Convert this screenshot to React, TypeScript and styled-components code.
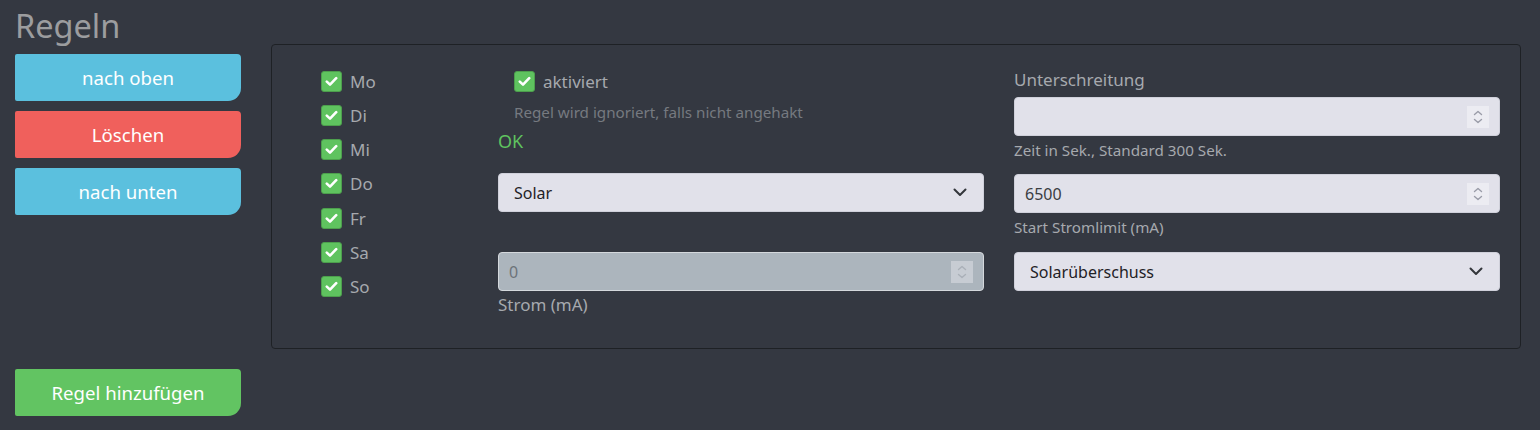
import React from 'react';
import styled, { createGlobalStyle } from 'styled-components';

const GlobalStyle = createGlobalStyle`
  html, body {
    margin: 0;
    padding: 0;
    background: #343841;
    font-family: 'Noto Sans', 'Open Sans', sans-serif;
  }
`;

const Page = styled.div`
  width: 1540px;
  height: 430px;
  padding: 0 19px 0 15px;
  box-sizing: border-box;
  background: #343841;
`;

const Title = styled.h1`
  margin: 0;
  height: 44px;
  line-height: 52px;
  font-size: 32.5px;
  font-weight: 400;
  color: #9c9d9f;
`;

const Row = styled.div`
  display: flex;
  align-items: flex-start;
  gap: 30px;
`;

const Side = styled.div`
  width: 226px;
  padding-top: 10px;
  display: flex;
  flex-direction: column;
  gap: 10px;
  flex-shrink: 0;
`;

const ActionButton = styled.button<{ tone: string }>`
  width: 226px;
  height: 47px;
  border: none;
  border-radius: 2px 4px 13px 2px;
  background: ${({ tone }) => tone};
  color: #ffffff;
  font-family: inherit;
  font-size: 18.6px;
  cursor: pointer;
`;

const Panel = styled.div`
  flex: 1;
  height: 305px;
  box-sizing: border-box;
  border: 1px solid #1e2125;
  border-radius: 4px;
  padding: 25px 20px 0 49px;
  display: grid;
  grid-template-columns: 147px 486px 486px;
  column-gap: 30px;
  align-items: start;
`;

const Days = styled.div`
  display: flex;
  flex-direction: column;
  gap: 12.3px;
`;

const CheckRow = styled.label<{ indent?: number }>`
  display: flex;
  align-items: center;
  gap: 8px;
  height: 22px;
  padding-left: ${({ indent }) => indent ?? 0}px;
  color: #a6a9ae;
  font-size: 17px;
`;

const Box = styled.span`
  width: 21px;
  height: 21px;
  border-radius: 3px;
  background: #5fc35f;
  border: 1px solid #4d9f4d;
  box-sizing: border-box;
  display: flex;
  align-items: center;
  justify-content: center;
`;

const Column = styled.div`
  display: flex;
  flex-direction: column;
`;

const Hint = styled.div<{ muted?: boolean; top?: number; indent?: number }>`
  font-size: 15.2px;
  color: ${({ muted }) => (muted ? '#767a80' : '#a6a9ae')};
  margin-top: ${({ top }) => top ?? 0}px;
  padding-left: ${({ indent }) => indent ?? 0}px;
  line-height: 20px;
`;

const Ok = styled.div`
  color: #5fc35f;
  font-size: 18px;
  line-height: 24px;
  margin-top: 7px;
`;

const Label = styled.div<{ top?: number }>`
  font-size: 17px;
  color: #a6a9ae;
  line-height: 24px;
  margin-top: ${({ top }) => top ?? 0}px;
`;

const Field = styled.div<{ disabled?: boolean; top?: number }>`
  height: 39px;
  box-sizing: border-box;
  border: 1px solid ${({ disabled }) => (disabled ? '#d4d8dc' : '#cfd0da')};
  border-radius: 4px;
  background: ${({ disabled }) => (disabled ? '#acb5bd' : '#e1e1ea')};
  display: flex;
  align-items: center;
  justify-content: space-between;
  margin-top: ${({ top }) => top ?? 0}px;
  padding: 0 16px 0 15px;
  font-size: 16px;
  color: #1f2226;
`;

const NumberField = styled(Field)`
  padding: 0 10px 0 10px;
`;

const Value = styled.span<{ disabled?: boolean }>`
  color: ${({ disabled }) => (disabled ? '#6c7379' : '#3a3d42')};
`;

const Spin = styled.span<{ disabled?: boolean }>`
  width: 22px;
  height: 22px;
  background: ${({ disabled }) => (disabled ? '#c7ccd3' : '#ececf2')};
  display: flex;
  align-items: center;
  justify-content: center;
`;

const AddRow = styled.div`
  margin-top: 20px;
`;

const Check = () => (
  <Box>
    <svg width="13" height="11" viewBox="0 0 13 11">
      <path d="M1.8 5.6 L5 8.6 L11.2 2.2" fill="none" stroke="#fff" strokeWidth="2.6" strokeLinecap="round" strokeLinejoin="round" />
    </svg>
  </Box>
);

const Chevron = () => (
  <svg width="14" height="9" viewBox="0 0 14 9">
    <path d="M1.5 1.5 L7 7 L12.5 1.5" fill="none" stroke="#33363b" strokeWidth="2" strokeLinecap="round" strokeLinejoin="round" />
  </svg>
);

const Spinner = ({ disabled }: { disabled?: boolean }) => (
  <Spin disabled={disabled}>
    <svg width="10" height="16" viewBox="0 0 10 16">
      <path d="M1.5 5.5 L5 2.5 L8.5 5.5 M1.5 10.5 L5 13.5 L8.5 10.5" fill="none" stroke={disabled ? '#aab0b8' : '#9a9ca8'} strokeWidth="1.4" strokeLinecap="round" strokeLinejoin="round" />
    </svg>
  </Spin>
);

const days = ['Mo', 'Di', 'Mi', 'Do', 'Fr', 'Sa', 'So'];

export default function App() {
  return (
    <Page>
      <GlobalStyle />
      <Title>Regeln</Title>
      <Row>
        <Side>
          <ActionButton tone="#5bc0de">nach oben</ActionButton>
          <ActionButton tone="#f0605c">Löschen</ActionButton>
          <ActionButton tone="#5bc0de">nach unten</ActionButton>
        </Side>
        <Panel>
          <Days>
            {days.map(d => (
              <CheckRow key={d}>
                <Check />
                {d}
              </CheckRow>
            ))}
          </Days>
          <Column>
            <CheckRow indent={16}>
              <Check />
              aktiviert
            </CheckRow>
            <Hint muted top={10} indent={16}>
              Regel wird ignoriert, falls nicht angehakt
            </Hint>
            <Ok>OK</Ok>
            <Field top={20}>
              Solar
              <Chevron />
            </Field>
            <NumberField disabled top={40}>
              <Value disabled>0</Value>
              <Spinner disabled />
            </NumberField>
            <Label top={2}>Strom (mA)</Label>
          </Column>
          <Column>
            <Label top={-2}>Unterschreitung</Label>
            <NumberField top={5}>
              <Value />
              <Spinner />
            </NumberField>
            <Hint top={4}>Zeit in Sek., Standard 300 Sek.</Hint>
            <NumberField top={14}>
              <Value>6500</Value>
              <Spinner />
            </NumberField>
            <Hint top={4}>Start Stromlimit (mA)</Hint>
            <Field top={15}>
              Solarüberschuss
              <Chevron />
            </Field>
          </Column>
        </Panel>
      </Row>
      <AddRow>
        <ActionButton tone="#62c462">Regel hinzufügen</ActionButton>
      </AddRow>
    </Page>
  );
}
